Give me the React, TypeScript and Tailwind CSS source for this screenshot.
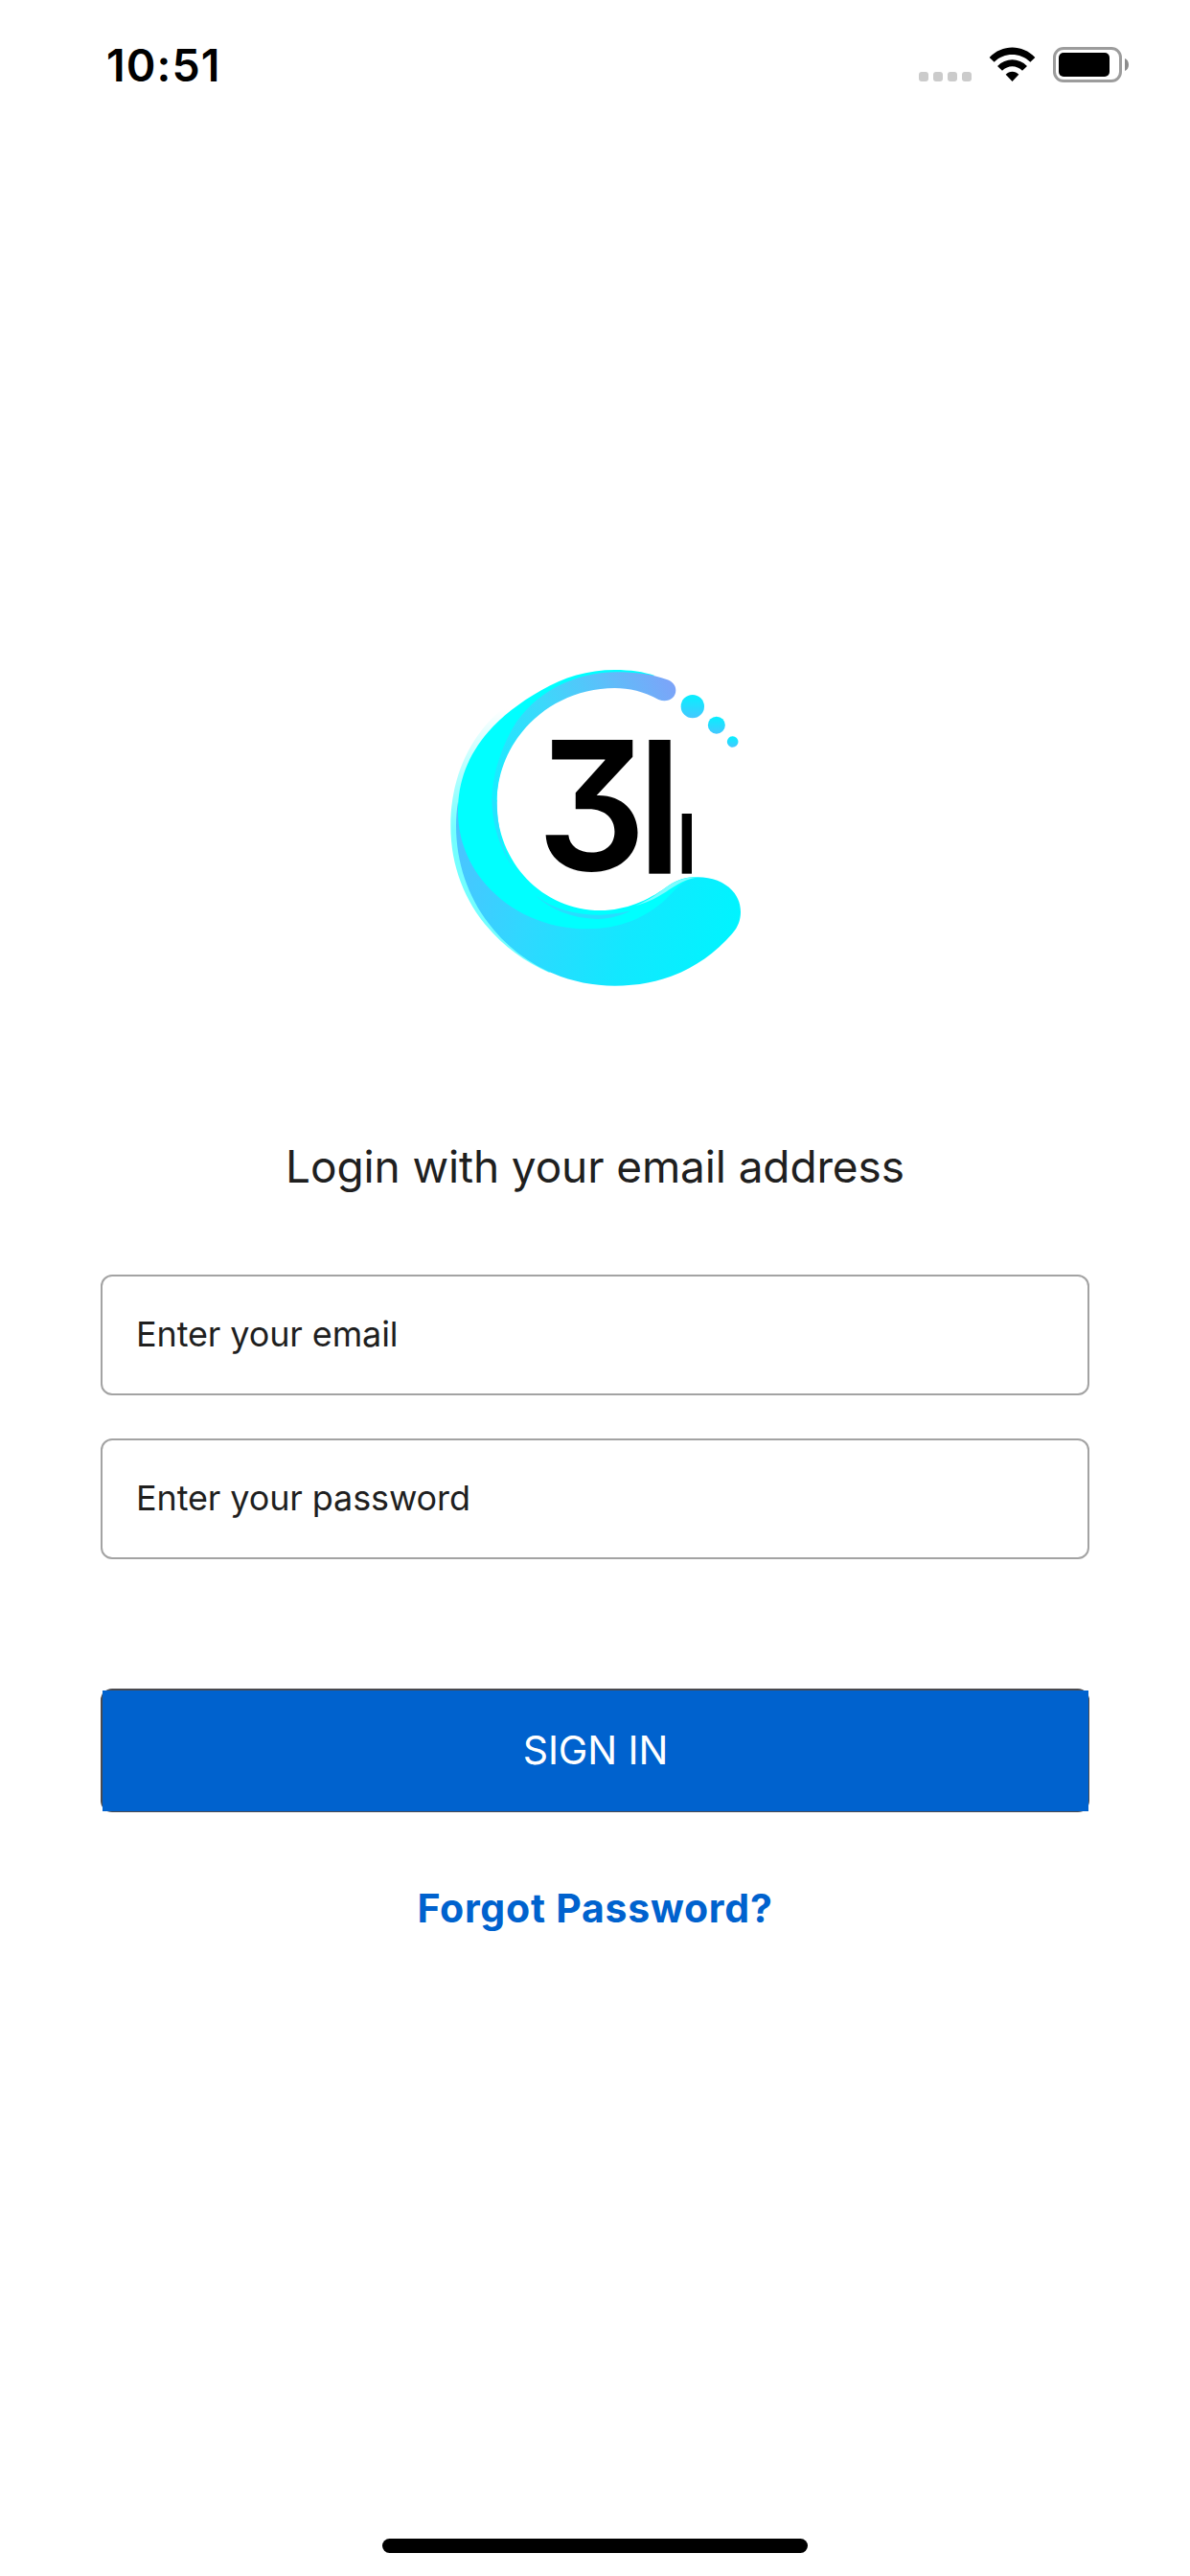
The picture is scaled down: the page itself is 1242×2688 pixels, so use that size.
function CellularDots() {
  return (
    <div className="mt-[26px] flex gap-[5px]">
      {[0, 1, 2, 3].map((i) => (
        <span key={i} className="size-[10px] rounded-[3px] bg-[#cbcbcb]" />
      ))}
    </div>
  );
}

function WifiIcon() {
  return (
    <svg className="ml-[18px] h-[37px] w-[49px]" viewBox="0 0 147 111" aria-label="Wi-Fi">
      <path d="M2 33 C41 -9 106 -9 145 33 L130 47 C98 16 48 16 17 47 Z" />
      <path d="M27 60 C53 33 94 33 120 60 L105 74 C87 56 60 56 42 74 Z" />
      <path d="M53 86 C64 74 83 74 94 86 L73.500 108 Z" />
    </svg>
  );
}

function BatteryIcon() {
  return (
    <div className="ml-[18px] flex items-center">
      <div className="h-[37px] w-[72px] rounded-[11px] border-3 border-[#9c9c9c] p-[3px]">
        <div className="h-[25px] w-[53px] rounded-[5px] bg-black" />
      </div>
      <svg className="ml-[3px] h-[13px] w-[4px]" viewBox="0 0 4 13">
        <path d="M0 0 C5.300 2 5.300 11 0 13 Z" fill="#8c8c8c" />
      </svg>
    </div>
  );
}

function StatusBar() {
  return (
    <header className="flex h-[136px] items-start justify-between pr-[64px] pl-[111px]">
      <span className="mt-[38px] text-[46.500px] leading-[60px] font-semibold tracking-[1.100px] text-black">
        10:51
      </span>
      <div className="mt-[49px] flex items-start">
        <CellularDots />
        <WifiIcon />
        <BatteryIcon />
      </div>
    </header>
  );
}

function Logo() {
  return (
    <svg className="h-[370px] w-[350px] self-start" viewBox="0 0 1050 1110" aria-label="31 logo">
      <defs>
        <linearGradient id="wave" gradientUnits="userSpaceOnUse" x1="78" y1="600" x2="969" y2="830">
          <stop offset="0" stopColor="#4ac4ff" />
          <stop offset="0.300" stopColor="#2fd8ff" />
          <stop offset="0.650" stopColor="#12e8ff" />
          <stop offset="1" stopColor="#00f4ff" />
        </linearGradient>
        <linearGradient id="arm" gradientUnits="userSpaceOnUse" x1="190" y1="420" x2="765" y2="120">
          <stop offset="0" stopColor="#18ecff" />
          <stop offset="0.400" stopColor="#3cd8fb" />
          <stop offset="0.700" stopColor="#5bc0fa" />
          <stop offset="1" stopColor="#7ca4f8" />
        </linearGradient>
        <linearGradient id="halo" gradientUnits="userSpaceOnUse" x1="0" y1="180" x2="0" y2="560">
          <stop offset="0" stopColor="#00ffff" stopOpacity="0" />
          <stop offset="1" stopColor="#00ffff" stopOpacity="0.550" />
        </linearGradient>
        <linearGradient id="dot" x1="0" y1="0" x2="0" y2="1">
          <stop offset="0.100" stopColor="#0cecff" />
          <stop offset="1" stopColor="#45c8ff" />
        </linearGradient>
      </defs>

      {/* soft outer edge */}
      <path
        d="M300 125 C140 215 61 370 61 545 C61 760 190 925 370 1005 L400 960 L200 700 L140 400 Z"
        fill="url(#halo)"
      />
      {/* lower wave */}
      <path
        d="M84 470 C80 495 78 520 78 545 C78 825 300 1046 575 1046 C725 1046 850 990 945 880 C960 862 969 840 969 815 C969 750 910 706 835 706 C800 706 770 720 735 755 C680 820 590 850 490 850 C280 850 130 700 84 470 Z"
        fill="url(#wave)"
      />
      {/* bright crescent */}
      <path
        d="M700 75 C665 63 625 57 575 57 C490 57 415 80 345 121 C170 220 84 345 84 500 C84 700 260 868 490 868 C590 868 670 835 735 775 C765 745 785 716 835 706 C790 702 760 720 735 738 C680 778 610 810 530 810 C350 810 205 660 205 470 C205 280 350 112 575 112 Z"
        fill="#00ffff"
      />
      <path
        d="M640 795 C690 775 715 752 735 738 C760 720 790 706 835 706 C780 715 755 742 722 760 C700 775 670 788 640 795 Z"
        fill="#7dfcff"
      />
      {/* inner rim shades */}
      <path d="M190 460 C190 540 215 620 262 685 C222 620 206 545 206 465 Z" fill="#25e2ff" />
      <path
        d="M325 762 C380 806 450 824 530 824 C565 823 600 817 625 811 C600 825 560 837 520 837 C440 835 375 808 325 762 Z"
        fill="#29dcff"
      />
      {/* upper arm */}
      <path
        d="M190 460 C192 390 215 310 255 240 C320 128 450 64 580 64 C640 64 690 70 740 88 C755 94 766 105 766 121 C766 148 738 161 712 150 C665 125 620 114 575 114 C360 116 206 285 206 470 Z"
        fill="url(#arm)"
      />

      <circle cx="818.500" cy="171.500" r="36.500" fill="url(#dot)" />
      <circle cx="893.500" cy="230" r="27" fill="url(#dot)" />
      <circle cx="944" cy="282" r="17.500" fill="url(#dot)" />

      <text
        transform="translate(502 683) scale(0.960 1)"
        textAnchor="middle"
        className="text-[560px] font-semibold [font-feature-settings:'cv09']"
      >
        3
      </text>
      <rect x="682" y="276" width="67" height="419" />
      <rect x="785" y="507" width="31" height="188" />
    </svg>
  );
}

function Field({ label }: { label: string }) {
  return (
    <div className="flex h-[126px] items-center rounded-[12px] border-2 border-[#a3a3a3] pl-[35px] text-[36px] leading-[44px] tracking-[-0.120px] text-[#1f1f1f]">
      <span className="-mt-[2px]">{label}</span>
    </div>
  );
}

export default function App() {
  return (
    <div className="flex h-[2688px] w-[1242px] flex-col bg-white font-[Inter,sans-serif]">
      <StatusBar />
      <main className="flex flex-1 flex-col px-[105px] pt-[544px]">
        <div className="pl-[345px]">
          <Logo />
        </div>
        <h1 className="mt-[137px] text-center text-[46px] leading-[60px] font-normal tracking-[-0.120px] text-[#1f1f1f]">
          Login with your email address
        </h1>
        <form className="mt-[83px] flex flex-col">
          <Field label="Enter your email" />
          <div className="h-[45px]" />
          <Field label="Enter your password" />
          <div className="mt-[135px] h-[129px] rounded-[12px] bg-[#4a4a4f] pt-[2px] pr-px pb-px pl-[2px]">
            <button
              type="button"
              className="block h-[126px] w-full bg-[#0062ce] pb-[3px] text-[41px] leading-[50px] font-normal tracking-[-0.100px] text-white"
            >
              SIGN IN
            </button>
          </div>
        </form>
        <a className="mt-[70px] text-center text-[41px] leading-[60px] font-bold tracking-[0.750px] text-[#0062ce]">
          Forgot Password?
        </a>
      </main>
      <div className="mb-[24px] h-[15px] w-[444px] self-center rounded-full bg-black" />
    </div>
  );
}
